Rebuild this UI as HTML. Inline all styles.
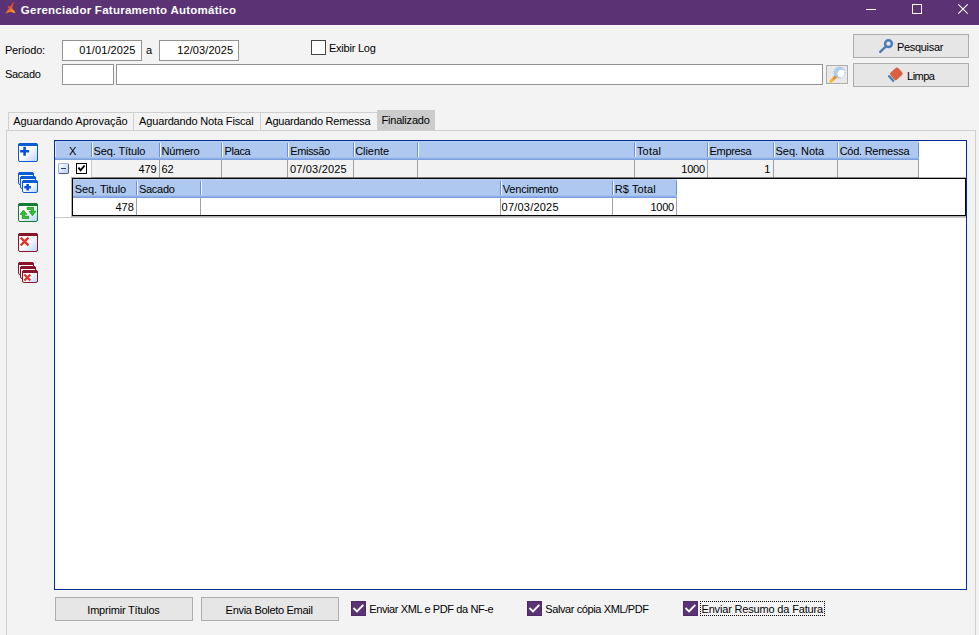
<!DOCTYPE html>
<html><head><meta charset="utf-8"><title>Gerenciador Faturamento Automático</title>
<style>
*{box-sizing:border-box;margin:0;padding:0}
html,body{width:979px;height:635px;overflow:hidden;background:#f3f3f3}
body{position:relative;font-family:"Liberation Sans",sans-serif;font-size:11px;color:#000}
.a,.t{position:absolute;white-space:nowrap}
.t{line-height:14px;height:14px}
#tb{left:0;top:0;width:979px;height:25px;background:#5b3374}
#wl{left:0;top:25px;width:979px;height:1px;background:#fafafa}
#title{left:20.8px;top:2px;color:#fff;font-weight:bold;font-size:11.5px;line-height:16px;letter-spacing:0.26px}
.inp{background:#fff;border:1px solid #939393}
.btn{background:#e6e6e6;border:1px solid #adadad}
.cb{width:15px;height:15px;background:#fff;border:1px solid #444}
.cbc{width:15px;height:15px;background:#5b3374;border:1px solid #4f2b66}
.tab{top:112px;height:18px;border:1px solid #d0d0d0;border-bottom:none;background:#f3f3f3}
.tab.act{background:#cccccc;border-color:#cccccc;top:110px;height:20px}
#panel{left:6px;top:130px;width:970px;height:510px;border:1px solid #d0d0d0;background:#f3f3f3}
#grid{left:54px;top:140px;width:913px;height:450px;border:1px solid #062c96;background:#fff}
.hd{height:19px;background:linear-gradient(#bdd4f5 0,#aec8ef 1.5px,#aec8ef 16px,#9cbbea 17px,#7da2df 18px,#7a9fde 19px)}
.hs{width:2px;height:14px;border-left:1px solid #6a8fd6;border-right:1px solid #f4f8ff}
.rw{height:18px;background:#f2f2f2;border-bottom:1px solid #b8b8b8}
.vs{width:1px;background:#a0a0a0}
</style></head><body>
<div class="a" id="tb"></div><div class="a" id="wl"></div>
<svg class="a" style="left:4px;top:0" width="14" height="16" viewBox="4 0 14 16"><defs><linearGradient id="lg" gradientUnits="userSpaceOnUse" x1="8.500" y1="5.500" x2="14" y2="12"><stop offset="0" stop-color="#e63a2a"/><stop offset="0.5" stop-color="#f36c21"/><stop offset="1" stop-color="#fbb61f"/></linearGradient></defs><path d="M13.8 2 L12.1 6.600 L11.600 8 L15.100 12.700 L10.500 11.400 L5.900 13.100 L9.200 8.400 L7.800 6.200 L10.300 6.800 Z" fill="url(#lg)" stroke="url(#lg)" stroke-width="0.600" stroke-linejoin="round"/></svg>
<div class="a" id="title">Gerenciador Faturamento Automático</div>
<svg class="a" style="left:860px;top:0" width="119" height="25" viewBox="860 0 119 25"><g stroke="#fff" stroke-width="1" fill="none"><path d="M866 9.5H876"/><rect x="912.5" y="4.500" width="9" height="9"/><path d="M958.3 4.300L967.700 13.700M967.700 4.300L958.300 13.700" stroke-width="1.100"/></g></svg>

<span class="t" style="left:4.90px;top:43px;letter-spacing:-0.187px;">Período:</span>
<div class="a inp" style="left:62px;top:40px;width:80px;height:21px"></div>
<span class="t" style="left:79.20px;top:43px;letter-spacing:0.134px;">01/01/2025</span>
<span class="t" style="left:146.10px;top:43px;letter-spacing:0.575px;">a</span>
<div class="a inp" style="left:159px;top:40px;width:80px;height:21px"></div>
<span class="t" style="left:177.30px;top:43px;letter-spacing:0.084px;">12/03/2025</span>
<span class="t" style="left:4.90px;top:67px;letter-spacing:-0.269px;">Sacado</span>
<div class="a inp" style="left:62px;top:64px;width:52px;height:21px"></div>
<div class="a inp" style="left:116px;top:64px;width:707px;height:21px"></div>
<div class="a cb" style="left:311px;top:40px"></div>
<span class="t" style="left:328.90px;top:41px;letter-spacing:-0.212px;">Exibir Log</span>
<div class="a btn" style="left:826px;top:65px;width:22px;height:19px;background:#e8e8e8"></div>
<svg class="a" style="left:826px;top:65px;overflow:visible" width="22" height="19" viewBox="826 65 22 19"><defs><linearGradient id="hg" x1="0" y1="1" x2="1" y2="0"><stop offset="0" stop-color="#fbc23a"/><stop offset="1" stop-color="#ee7f12"/></linearGradient><radialGradient id="lens" cx="0.68" cy="0.6" r="0.55"><stop offset="0" stop-color="#fff"/><stop offset="0.62" stop-color="#fff"/><stop offset="0.72" stop-color="#a9cdf1"/><stop offset="1" stop-color="#a9cdf1"/></radialGradient></defs><path d="M835.6 76.800L830.700 81.500" stroke="url(#hg)" stroke-width="3" stroke-linecap="round"/><circle cx="839.500" cy="72.600" r="5.500" fill="url(#lens)" stroke="#7d8fd2" stroke-width="0.600" stroke-dasharray="1 1.200"/></svg>
<div class="a btn" style="left:853px;top:34px;width:116px;height:24px"></div>
<svg class="a" style="left:878px;top:37px" width="16" height="17" viewBox="878 37 16 17"><circle cx="888.500" cy="43.700" r="3.400" fill="none" stroke="#4a7db8" stroke-width="2.500"/><path d="M885.4 46.800L880.200 51.900" stroke="#4a7db8" stroke-width="2.400" stroke-linecap="round"/></svg>
<span class="t" style="left:896.90px;top:40px;letter-spacing:-0.302px;">Pesquisar</span>
<div class="a btn" style="left:853px;top:63px;width:116px;height:24px"></div>
<svg class="a" style="left:886px;top:66px" width="19" height="18" viewBox="886 66 19 18"><g transform="translate(0.9 -1.2) rotate(-42 895.500 75)"><rect x="890" y="70.200" width="10.800" height="9.600" rx="2.300" fill="#d96040"/><rect x="887.300" y="70.800" width="2.200" height="8.400" rx="0.800" fill="#4a7db8"/></g></svg>
<span class="t" style="left:907.10px;top:69px;letter-spacing:-0.534px;">Limpa</span>
<div class="a" id="panel"></div>
<div class="a tab" style="left:8px;width:126px"></div>
<div class="a tab" style="left:133px;width:128px"></div>
<div class="a tab" style="left:260px;width:118px"></div>
<div class="a tab act" style="left:377px;width:58px"></div>
<span class="t" style="left:13.20px;top:114px;letter-spacing:-0.024px;">Aguardando Aprovação</span>
<span class="t" style="left:139.10px;top:114px;letter-spacing:-0.160px;">Aguardando Nota Fiscal</span>
<span class="t" style="left:265.30px;top:114px;letter-spacing:-0.243px;">Aguardando Remessa</span>
<span class="t" style="left:381.50px;top:113px;letter-spacing:-0.194px;">Finalizado</span>
<div class="a" id="grid"></div>
<div class="a hd" style="left:55px;top:141px;width:864px"></div>
<div class="a" style="left:55px;top:142px;width:1px;height:15px;background:#e6f0fd"></div>
<div class="a" style="left:73px;top:180px;width:1px;height:15px;background:#e6f0fd"></div>
<div class="a hs" style="left:91px;top:143px"></div>
<div class="a hs" style="left:159px;top:143px"></div>
<div class="a hs" style="left:221px;top:143px"></div>
<div class="a hs" style="left:287px;top:143px"></div>
<div class="a hs" style="left:353px;top:143px"></div>
<div class="a hs" style="left:417px;top:143px"></div>
<div class="a hs" style="left:634px;top:143px"></div>
<div class="a hs" style="left:707px;top:143px"></div>
<div class="a hs" style="left:773px;top:143px"></div>
<div class="a hs" style="left:837px;top:143px"></div>
<div class="a" style="left:918px;top:143px;width:1px;height:14px;background:#6a8fd6"></div>
<div class="a rw" style="left:92px;top:160px;width:827px"></div>
<div class="a vs" style="left:91px;top:160px;height:18px;background:#c6c6c6"></div>
<div class="a vs" style="left:159px;top:160px;height:18px"></div>
<div class="a vs" style="left:221px;top:160px;height:18px"></div>
<div class="a vs" style="left:287px;top:160px;height:18px"></div>
<div class="a vs" style="left:353px;top:160px;height:18px"></div>
<div class="a vs" style="left:417px;top:160px;height:18px"></div>
<div class="a vs" style="left:634px;top:160px;height:18px"></div>
<div class="a vs" style="left:707px;top:160px;height:18px"></div>
<div class="a vs" style="left:773px;top:160px;height:18px"></div>
<div class="a vs" style="left:837px;top:160px;height:18px"></div>
<div class="a vs" style="left:918px;top:160px;height:18px"></div>
<span class="t" style="left:68.90px;top:144px;letter-spacing:-0.844px;">X</span>
<span class="t" style="left:93.60px;top:144px;letter-spacing:-0.118px;">Seq. Título</span>
<span class="t" style="left:161.60px;top:144px;letter-spacing:-0.204px;">Número</span>
<span class="t" style="left:224.50px;top:144px;letter-spacing:-0.326px;">Placa</span>
<span class="t" style="left:290.30px;top:144px;letter-spacing:-0.412px;">Emissão</span>
<span class="t" style="left:355.20px;top:144px;letter-spacing:-0.050px;">Cliente</span>
<span class="t" style="left:636.90px;top:144px;letter-spacing:0.230px;">Total</span>
<span class="t" style="left:709.60px;top:144px;letter-spacing:-0.333px;">Empresa</span>
<span class="t" style="left:775.50px;top:144px;letter-spacing:-0.036px;">Seq. Nota</span>
<span class="t" style="left:839.70px;top:144px;letter-spacing:-0.264px;">Cód. Remessa</span>
<span class="t" style="left:138.60px;top:162px;letter-spacing:-0.153px;">479</span>
<span class="t" style="left:161.60px;top:162px;letter-spacing:-0.325px;">62</span>
<span class="t" style="left:290.00px;top:162px;letter-spacing:0.174px;">07/03/2025</span>
<span class="t" style="left:681.30px;top:162px;letter-spacing:-0.246px;">1000</span>
<span class="t" style="left:764.30px;top:162px;letter-spacing:-0.925px;">1</span>
<div class="a" style="left:58px;top:163px;width:11px;height:11px;border-radius:2px;border:1px solid #9fb0d0;border-right-color:#44597f;border-bottom-color:#44597f;background:linear-gradient(135deg,#f4f7ff 15%,#bccbf0)"></div>
<div class="a" style="left:61px;top:168px;width:5px;height:1px;background:#2a3f6c"></div>
<div class="a" style="left:76px;top:163px;width:11px;height:11px;border:1px solid #000;background:#fff"></div>
<svg class="a" style="left:76px;top:163px" width="11" height="11" viewBox="76 163 11 11"><path d="M78.4 167.600L80.600 170.300L84.600 165.500" fill="none" stroke="#000" stroke-width="1.900"/></svg>
<div class="a" style="left:71px;top:177px;width:896px;height:40px;border:1px solid rgba(0,0,0,0.3);border-right:none"></div>
<div class="a" style="left:72px;top:178px;width:894px;height:38px;border:1px solid #000;background:#fff"></div>
<div class="a hd" style="left:73px;top:179px;width:604px"></div>
<div class="a hs" style="left:136px;top:181px"></div>
<div class="a hs" style="left:200px;top:181px"></div>
<div class="a hs" style="left:500px;top:181px"></div>
<div class="a hs" style="left:612px;top:181px"></div>
<div class="a" style="left:676px;top:181px;width:1px;height:14px;background:#6a8fd6"></div>
<div class="a vs" style="left:136px;top:198px;height:17px"></div>
<div class="a vs" style="left:200px;top:198px;height:17px"></div>
<div class="a vs" style="left:500px;top:198px;height:17px"></div>
<div class="a vs" style="left:612px;top:198px;height:17px"></div>
<div class="a vs" style="left:676px;top:198px;height:17px"></div>
<div class="a" style="left:55px;top:217px;width:911px;height:1px;background:#c8c8c8"></div>
<span class="t" style="left:74.70px;top:182px;letter-spacing:-0.053px;">Seq. Titulo</span>
<span class="t" style="left:138.90px;top:182px;letter-spacing:-0.269px;">Sacado</span>
<span class="t" style="left:502.80px;top:182px;letter-spacing:-0.208px;">Vencimento</span>
<span class="t" style="left:614.80px;top:182px;letter-spacing:0.093px;">R$ Total</span>
<span class="t" style="left:115.50px;top:200px;letter-spacing:-0.053px;">478</span>
<span class="t" style="left:501.60px;top:200px;letter-spacing:0.214px;">07/03/2025</span>
<span class="t" style="left:650.40px;top:200px;letter-spacing:-0.246px;">1000</span>
<svg class="a" style="left:14px;top:140px" width="28" height="148" viewBox="14 140 28 148"><defs><linearGradient id="wg" x1="0" y1="0" x2="1" y2="1"><stop offset="0.450" stop-color="#fff"/><stop offset="1" stop-color="#b4d2f7"/></linearGradient></defs><rect x="18.5" y="143.5" width="19" height="18" rx="1.500" fill="url(#wg)" stroke="#0b5bd9"/><path d="M18.5 145.5V145Q18.5 143.5 20 143.5H36Q37.5 143.5 37.5 145V145.5Z" fill="#0b5bd9" stroke="#0b5bd9"/><path d="M20.1 151.3H29.1M24.6 146.8V155.8" stroke="#0a4fe0" stroke-width="2.600" fill="none"/><rect x="18.5" y="172.5" width="15" height="12" rx="1.500" fill="url(#wg)" stroke="#0b5bd9"/><path d="M18.5 174.5V174Q18.5 172.5 20 172.5H32Q33.5 172.5 33.5 174V174.5Z" fill="#0b5bd9" stroke="#0b5bd9"/><rect x="20.5" y="176.5" width="15" height="12" rx="1.500" fill="url(#wg)" stroke="#0b5bd9"/><path d="M20.5 178.5V178Q20.5 176.5 22 176.5H34Q35.5 176.5 35.5 178V178.5Z" fill="#0b5bd9" stroke="#0b5bd9"/><rect x="22.5" y="180.5" width="15" height="12" rx="1.500" fill="url(#wg)" stroke="#0b5bd9"/><path d="M22.5 182.5V182Q22.5 180.5 24 180.5H36Q37.5 180.5 37.5 182V182.5Z" fill="#0b5bd9" stroke="#0b5bd9"/><path d="M24.3 187.3H30.900000000000002M27.6 184.0V190.60000000000002" stroke="#0a4fe0" stroke-width="2.600" fill="none"/><rect x="18.5" y="203.5" width="19" height="18" rx="1.500" fill="url(#wg)" stroke="#147a34"/><path d="M18.5 205.5V205Q18.5 203.5 20 203.5H36Q37.5 203.5 37.5 205V205.5Z" fill="#147a34" stroke="#147a34"/><path d="M23.5 210L27 214.300H24.700V216.200H28.700V218.600H22.200V214.300H20.100Z" fill="#35c034" stroke="#0d8a18" stroke-width="0.700"/><path d="M27.100 207.300H33.600V211.300H35.900L32.400 215.800L29.100 211.300H31.300V209.600H27.100Z" fill="#35c034" stroke="#0d8a18" stroke-width="0.700"/><rect x="18.5" y="233.5" width="19" height="18" rx="1.500" fill="url(#wg)" stroke="#8a1528"/><path d="M18.5 235.5V235Q18.5 233.5 20 233.5H36Q37.5 233.5 37.5 235V235.5Z" fill="#8a1528" stroke="#8a1528"/><path d="M20.700000000000003 237.6L28.5 245.4M28.5 237.6L20.700000000000003 245.4" stroke="#e23222" stroke-width="2.2" fill="none"/><rect x="18.5" y="262.5" width="15" height="12" rx="1.500" fill="url(#wg)" stroke="#8a1528"/><path d="M18.5 264.5V264Q18.5 262.5 20 262.5H32Q33.5 262.5 33.5 264V264.5Z" fill="#8a1528" stroke="#8a1528"/><rect x="20.5" y="266.5" width="15" height="12" rx="1.500" fill="url(#wg)" stroke="#8a1528"/><path d="M20.5 268.5V268Q20.5 266.5 22 266.5H34Q35.5 266.5 35.5 268V268.5Z" fill="#8a1528" stroke="#8a1528"/><rect x="22.5" y="270.5" width="15" height="12" rx="1.500" fill="url(#wg)" stroke="#8a1528"/><path d="M22.5 272.5V272Q22.5 270.5 24 270.5H36Q37.5 270.5 37.5 272V272.5Z" fill="#8a1528" stroke="#8a1528"/><path d="M24.3 274.5L30.3 280.5M30.3 274.5L24.3 280.5" stroke="#e23222" stroke-width="2.1" fill="none"/></svg>
<div class="a btn" style="left:55px;top:597px;width:138px;height:24px"></div>
<div class="a btn" style="left:201px;top:597px;width:138px;height:24px"></div>
<span class="t" style="left:87.30px;top:603px;letter-spacing:-0.206px;">Imprimir Títulos</span>
<span class="t" style="left:225.60px;top:603px;letter-spacing:-0.296px;">Envia Boleto Email</span>
<div class="a cbc" style="left:351px;top:601px"></div>
<svg class="a" style="left:351px;top:601px" width="15" height="15" viewBox="0 0 15 15"><path d="M2.500 7L6 10.400L12.300 3.800" fill="none" stroke="#fff" stroke-width="1.900"/></svg>
<div class="a cbc" style="left:527px;top:601px"></div>
<svg class="a" style="left:527px;top:601px" width="15" height="15" viewBox="0 0 15 15"><path d="M2.500 7L6 10.400L12.300 3.800" fill="none" stroke="#fff" stroke-width="1.900"/></svg>
<div class="a cbc" style="left:683px;top:601px"></div>
<svg class="a" style="left:683px;top:601px" width="15" height="15" viewBox="0 0 15 15"><path d="M2.500 7L6 10.400L12.300 3.800" fill="none" stroke="#fff" stroke-width="1.900"/></svg>
<span class="t" style="left:369.30px;top:602px;letter-spacing:-0.395px;">Enviar XML e PDF da NF-e</span>
<span class="t" style="left:545.30px;top:602px;letter-spacing:-0.398px;">Salvar cópia XML/PDF</span>
<span class="t" style="left:701.50px;top:602px;letter-spacing:-0.171px;">Enviar Resumo da Fatura</span>
<div class="a" style="left:700px;top:601px;width:125px;height:15px;border:1px dotted #000"></div>
</body></html>
